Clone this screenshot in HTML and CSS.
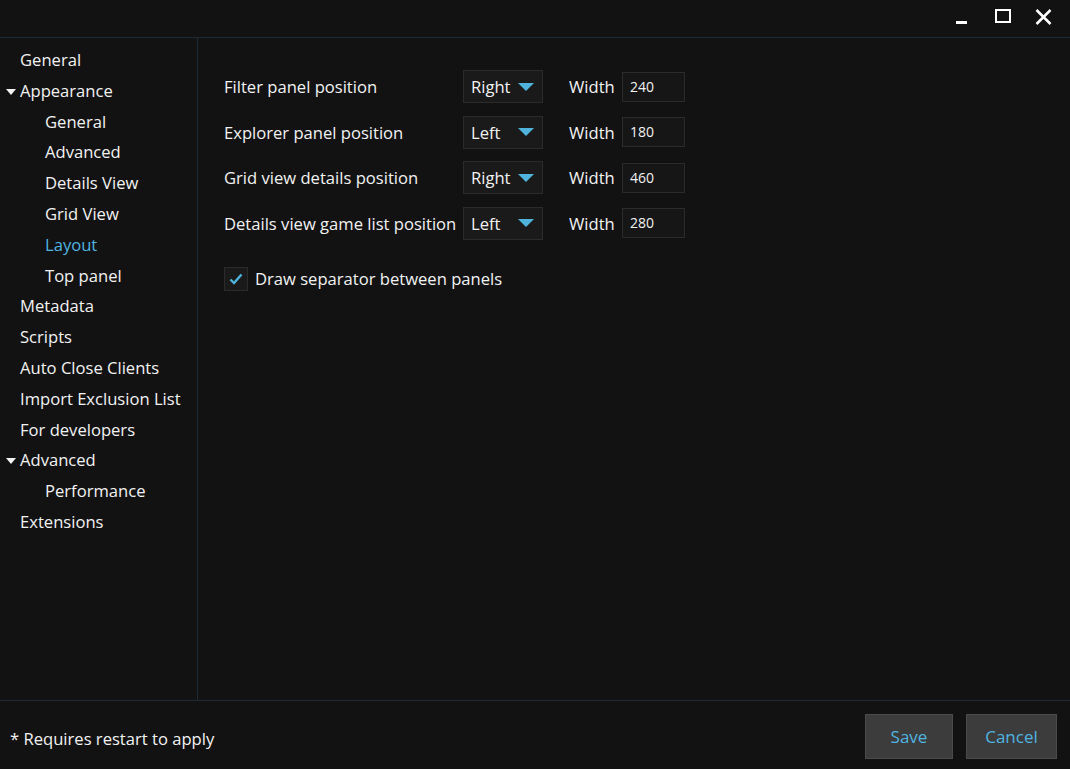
FILE: index.html
```html
<!DOCTYPE html>
<html>
<head>
<meta charset="utf-8">
<link rel="stylesheet" href="styles.css">
</head>
<body>
<div class="window">
  <header class="titlebar">
    <div class="controls">
      <svg class="ctl" width="18" height="18" viewBox="0 0 18 18"><rect x="3" y="13" width="11" height="3" fill="#fff"/></svg>
      <svg class="ctl" width="18" height="18" viewBox="0 0 18 18"><rect x="2" y="2" width="14" height="12" fill="none" stroke="#fff" stroke-width="2"/></svg>
      <svg class="ctl" width="18" height="18" viewBox="0 0 18 18"><path d="M1.5 2 L15.5 16 M15.5 2 L1.5 16" stroke="#fff" stroke-width="2.5" fill="none"/></svg>
    </div>
  </header>
  <div class="body">
    <nav class="sidebar">
      <div class="item l1">General</div>
      <div class="item l1 exp"><span class="tri"></span>Appearance</div>
      <div class="item l2">General</div>
      <div class="item l2">Advanced</div>
      <div class="item l2">Details View</div>
      <div class="item l2">Grid View</div>
      <div class="item l2 sel">Layout</div>
      <div class="item l2">Top panel</div>
      <div class="item l1">Metadata</div>
      <div class="item l1">Scripts</div>
      <div class="item l1">Auto Close Clients</div>
      <div class="item l1">Import Exclusion List</div>
      <div class="item l1">For developers</div>
      <div class="item l1 exp"><span class="tri"></span>Advanced</div>
      <div class="item l2">Performance</div>
      <div class="item l1">Extensions</div>
    </nav>
    <main class="content">
      <div class="grid">
        <div class="label">Filter panel position</div>
        <div class="combo"><span>Right</span><span class="arrow"></span></div>
        <div class="wlabel">Width</div>
        <div class="tbox">240</div>

        <div class="label">Explorer panel position</div>
        <div class="combo"><span>Left</span><span class="arrow"></span></div>
        <div class="wlabel">Width</div>
        <div class="tbox">180</div>

        <div class="label">Grid view details position</div>
        <div class="combo"><span>Right</span><span class="arrow"></span></div>
        <div class="wlabel">Width</div>
        <div class="tbox">460</div>

        <div class="label">Details view game list position</div>
        <div class="combo"><span>Left</span><span class="arrow"></span></div>
        <div class="wlabel">Width</div>
        <div class="tbox">280</div>
      </div>
      <label class="check">
        <span class="box"><svg width="14" height="12" viewBox="0 0 14 12"><path d="M1.5 6.5 L5 10 L12.5 1.5" stroke="#4fb3dc" stroke-width="2.4" fill="none"/></svg></span>
        <span>Draw separator between panels</span>
      </label>
    </main>
  </div>
  <footer class="footer">
    <div class="note">* Requires restart to apply</div>
    <div class="buttons">
      <button class="btn save">Save</button>
      <button class="btn cancel">Cancel</button>
    </div>
  </footer>
</div>
</body>
</html>
```
FILE: styles.css
```css
* { box-sizing: border-box; }
html, body { margin: 0; padding: 0; }
body {
  background: #121212;
  color: #f2f2f2;
  font-family: "Open Sans", "Noto Sans", sans-serif;
  font-size: 16.6px;
}
.window {
  width: 1070px;
  height: 769px;
  display: flex;
  flex-direction: column;
}
.titlebar {
  height: 38px;
  border-bottom: 1px solid #1d2933;
  display: flex;
  justify-content: flex-end;
}
.controls {
  display: flex;
  align-items: flex-start;
  padding-top: 8px;
  padding-right: 17px;
  gap: 23px;
}
.ctl { display: block; }
.body {
  flex: 1;
  display: flex;
  min-height: 0;
}
.sidebar {
  width: 198px;
  border-right: 1px solid #1d2933;
  padding-top: 7px;
}
.item {
  height: 30.8px;
  line-height: 30.8px;
  white-space: nowrap;
}
.item.l1 { padding-left: 20px; }
.item.l2 { padding-left: 45px; }
.item.sel { color: #50b4e0; }
.item.exp { position: relative; }
.tri {
  position: absolute;
  left: 6px;
  top: 13px;
  width: 0; height: 0;
  border-left: 5.5px solid transparent;
  border-right: 5.5px solid transparent;
  border-top: 6px solid #f2f2f2;
}
.content {
  flex: 1;
  padding: 32px 0 0 26px;
}
.grid {
  display: grid;
  grid-template-columns: 239px 80px 26px 53px 63px;
  grid-auto-rows: 33px;
  row-gap: 12.5px;
  align-items: center;
}
.label { white-space: nowrap; }
.combo {
  height: 33px;
  background: #1a1a1a;
  border: 1px solid #2b2b2b;
  display: flex;
  align-items: center;
  justify-content: space-between;
  padding: 0 8px 0 7px;
}
.arrow {
  width: 0; height: 0;
  border-left: 8px solid transparent;
  border-right: 8px solid transparent;
  border-top: 8px solid #4fb3dc;
}
.wlabel { grid-column: 4; }
.tbox {
  height: 30px;
  background: #161616;
  border: 1px solid #2b2b2b;
  font-size: 14px;
  line-height: 28px;
  padding-left: 7px;
}
.check {
  display: flex;
  align-items: center;
  gap: 7px;
  margin-top: 27px;
}
.box {
  width: 24px; height: 24px;
  background: #1a1a1a;
  border: 1px solid #2b2b2b;
  display: flex;
  align-items: center;
  justify-content: center;
}
.box svg { display: block; }
.footer {
  height: 69px;
  border-top: 1px solid #1d2933;
  display: flex;
  align-items: center;
  justify-content: space-between;
  padding: 0 13px 0 10px;
}
.note { padding-top: 6px; }
.buttons { display: flex; gap: 13px; padding-top: 2px; }
.btn {
  height: 45px;
  background: #3c3c3c;
  border: 1px solid #4a4a4a;
  color: #50b4e0;
  font-family: "Open Sans", "Noto Sans", sans-serif;
  font-size: 17px;
}
.save { width: 88px; }
.cancel { width: 91px; }
```
